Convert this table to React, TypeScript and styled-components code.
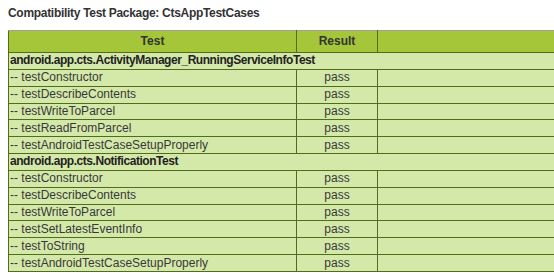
import React from 'react';
import styled, { createGlobalStyle } from 'styled-components';

const GlobalStyle = createGlobalStyle`
  html, body {
    margin: 0;
    padding: 0;
    overflow: hidden;
    background: #ffffff;
  }
  body {
    padding: 0 8px;
    font-family: 'Liberation Sans', Arial, sans-serif;
  }
`;

const Title = styled.div`
  font-size: 12px;
  font-weight: bold;
  letter-spacing: -0.3px;
  color: #333333;
  line-height: 14px;
  padding-top: 6px;
  height: 30px;
  box-sizing: border-box;
`;

const Table = styled.table`
  width: 700px;
  border-collapse: collapse;
  table-layout: fixed;
  font-size: 12px;
  color: #383838;
`;

const HeadRow = styled.tr`
  height: 22px;
`;

const HeadCell = styled.th<{ $w?: number }>`
  width: ${(p) => (p.$w ? `${p.$w}px` : 'auto')};
  background: #a5c639;
  border: 1px solid #4f6e1b;
  border-top-color: #a0a0a0;
  padding: 0;
  line-height: 13px;
  font-weight: bold;
  text-align: center;
  color: #333333;
`;

const Row = styled.tr`
  height: 16.85px;
  background: #d4e9a9;
`;

const Cell = styled.td<{ $center?: boolean; $bold?: boolean }>`
  border: 1px solid #4f6e1b;
  padding: 0 1px;
  line-height: 13px;
  white-space: nowrap;
  overflow: visible;
  text-align: ${(p) => (p.$center ? 'center' : 'left')};
  font-weight: ${(p) => (p.$bold ? 'bold' : 'normal')};
  letter-spacing: ${(p) => (p.$bold ? '-0.45px' : 'normal')};
  color: ${(p) => (p.$bold ? '#222222' : '#383838')};
`;

interface Suite {
  name: string;
  tests: string[];
}

const suites: Suite[] = [
  {
    name: 'android.app.cts.ActivityManager_RunningServiceInfoTest',
    tests: [
      'testConstructor',
      'testDescribeContents',
      'testWriteToParcel',
      'testReadFromParcel',
      'testAndroidTestCaseSetupProperly',
    ],
  },
  {
    name: 'android.app.cts.NotificationTest',
    tests: [
      'testConstructor',
      'testDescribeContents',
      'testWriteToParcel',
      'testSetLatestEventInfo',
      'testToString',
      'testAndroidTestCaseSetupProperly',
    ],
  },
];

const App: React.FC = () => {
  return (
    <>
      <GlobalStyle />
      <Title>Compatibility Test Package: CtsAppTestCases</Title>
      <Table>
        <thead>
          <HeadRow>
            <HeadCell $w={287}>Test</HeadCell>
            <HeadCell $w={80}>Result</HeadCell>
            <HeadCell />
          </HeadRow>
        </thead>
        <tbody>
          {suites.map((s) => (
            <React.Fragment key={s.name}>
              <Row>
                <Cell $bold colSpan={3}>{s.name}</Cell>
              </Row>
              {s.tests.map((t) => (
                <Row key={s.name + t}>
                  <Cell>-- {t}</Cell>
                  <Cell $center>pass</Cell>
                  <Cell />
                </Row>
              ))}
            </React.Fragment>
          ))}
        </tbody>
      </Table>
    </>
  );
};

export default App;
